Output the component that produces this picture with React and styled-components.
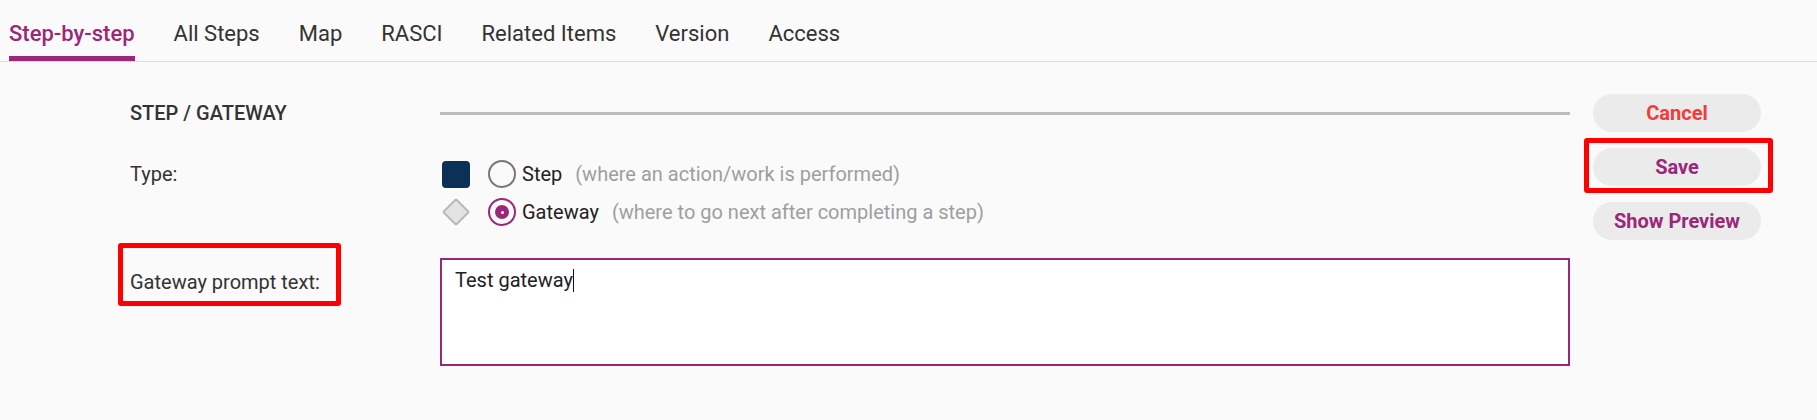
import React from "react";
import styled, { createGlobalStyle } from "styled-components";

const PURPLE = "#9c2779";

const GlobalStyle = createGlobalStyle`
  html, body { margin: 0; padding: 0; background: #fafafa; }
  body { font-family: Roboto, "Noto Sans", Arial, sans-serif; color: #2b2b2b; }
  * { box-sizing: border-box; }
`;

const TabBar = styled.nav`
  display: flex;
  gap: 39px;
  padding-left: 9px;
  border-bottom: 1px solid #dcdcdc;
`;

const Tab = styled.div`
  font-size: 22px;
  line-height: 24px;
  padding: 22px 0 10px;
  border-bottom: 5px solid ${(p) => (p.$active ? PURPLE : "transparent")};
  color: ${(p) => (p.$active ? PURPLE : "#333")};
  font-weight: ${(p) => (p.$active ? 500 : 400)};
  cursor: pointer;
`;

const Main = styled.main`
  display: flex;
  gap: 23px;
  padding: 32px 0 0 130px;
  align-items: flex-start;
`;

const Form = styled.div`
  width: 1440px;
  display: flex;
  flex-direction: column;
`;

const Row = styled.div`
  display: grid;
  grid-template-columns: 310px 1130px;
  align-items: ${(p) => p.$align || "start"};
  margin-top: ${(p) => p.$top || 0}px;
  min-height: ${(p) => p.$height || 0}px;
`;

const Heading = styled.h2`
  margin: 0;
  font-size: 20px;
  font-weight: 500;
  color: #333;
`;

const Divider = styled.div`
  height: 3px;
  background: #bdbdbd;
`;

const Label = styled.div`
  font-size: 20px;
  line-height: ${(p) => p.$lh || 24}px;
  color: #333;
  padding-top: ${(p) => p.$pt || 0}px;
`;

const Marked = styled.span`
  position: relative;
  display: inline-block;
`;

const Mark = styled.span`
  position: absolute;
  top: ${(p) => p.$t}px;
  left: ${(p) => p.$l}px;
  right: ${(p) => p.$r}px;
  bottom: ${(p) => p.$b}px;
  border: 5px solid #ff0000;
  border-radius: 3px;
  pointer-events: none;
`;

const Options = styled.div`
  display: flex;
  flex-direction: column;
  gap: 10px;
`;

const Option = styled.label`
  display: flex;
  align-items: center;
  height: 28px;
  font-size: 20px;
  cursor: pointer;
`;

const IconSlot = styled.span`
  width: 32px;
  height: 30px;
  display: flex;
  align-items: center;
  justify-content: center;
  margin-right: 16px;
`;

const StepIcon = styled.span`
  width: 28px;
  height: 27px;
  border-radius: 4px;
  background: #0c3157;
`;

const GatewayIcon = styled.span`
  width: 20px;
  height: 20px;
  background: #e4e4e4;
  border: 2px solid #b9b9b9;
  border-radius: 2px;
  transform: rotate(45deg);
`;

const Radio = styled.span`
  width: 28px;
  height: 28px;
  border-radius: 50%;
  border: 2px solid ${(p) => (p.$checked ? PURPLE : "#777")};
  display: flex;
  align-items: center;
  justify-content: center;
  margin-right: 6px;
  background: #fafafa;
`;

const RadioDot = styled.span`
  width: 14px;
  height: 14px;
  border-radius: 50%;
  background: ${PURPLE};
  display: flex;
  align-items: center;
  justify-content: center;
  &::after {
    content: "";
    width: 3px;
    height: 3px;
    border-radius: 50%;
    background: #fff;
  }
`;

const OptionText = styled.span`
  color: #222;
`;

const Hint = styled.span`
  color: #9e9e9e;
  margin-left: 13px;
`;

const TextBox = styled.div`
  height: 108px;
  border: 2px solid ${PURPLE};
  background: #fff;
  padding: 8px 13px;
  font-size: 20px;
  line-height: 24px;
  color: #222;
`;

const Caret = styled.span`
  display: inline-block;
  width: 1.5px;
  height: 23px;
  background: #111;
  vertical-align: -5px;
`;

const Buttons = styled.div`
  display: flex;
  flex-direction: column;
  gap: 16px;
`;

const Button = styled.button`
  width: 168px;
  height: 38px;
  border: none;
  border-radius: 19px;
  background: #ebebeb;
  font-family: Roboto, Arial, sans-serif;
  font-size: 20px;
  font-weight: 700;
  color: ${(p) => p.$color || PURPLE};
  cursor: pointer;
  padding: 0;
`;

const ButtonWrap = styled.div`
  position: relative;
`;

const tabs = ["Step-by-step", "All Steps", "Map", "RASCI", "Related Items", "Version", "Access"];

export default function App() {
  return (
    <>
      <GlobalStyle />
      <TabBar>
        {tabs.map((t, i) => (
          <Tab key={t} $active={i === 0}>
            {t}
          </Tab>
        ))}
      </TabBar>
      <Main>
        <Form>
          <Row $align="center" $height={38}>
            <Heading>STEP / GATEWAY</Heading>
            <Divider />
          </Row>
          <Row $top={28}>
            <Label $lh={28}>Type:</Label>
            <Options>
              <Option>
                <IconSlot>
                  <StepIcon />
                </IconSlot>
                <Radio />
                <OptionText>Step</OptionText>
                <Hint>(where an action/work is performed)</Hint>
              </Option>
              <Option>
                <IconSlot>
                  <GatewayIcon />
                </IconSlot>
                <Radio $checked>
                  <RadioDot />
                </Radio>
                <OptionText>Gateway</OptionText>
                <Hint>(where to go next after completing a step)</Hint>
              </Option>
            </Options>
          </Row>
          <Row $top={32}>
            <Label $pt={12}>
              <Marked>
                Gateway prompt text:
                <Mark $t={-27} $l={-12} $r={-21} $b={-12} />
              </Marked>
            </Label>
            <TextBox>
              Test gateway
              <Caret />
            </TextBox>
          </Row>
        </Form>
        <Buttons>
          <Button $color="#f23b3b">Cancel</Button>
          <ButtonWrap>
            <Button>Save</Button>
            <Mark $t={-10} $l={-9} $r={-12} $b={-7} />
          </ButtonWrap>
          <Button>Show Preview</Button>
        </Buttons>
      </Main>
    </>
  );
}
